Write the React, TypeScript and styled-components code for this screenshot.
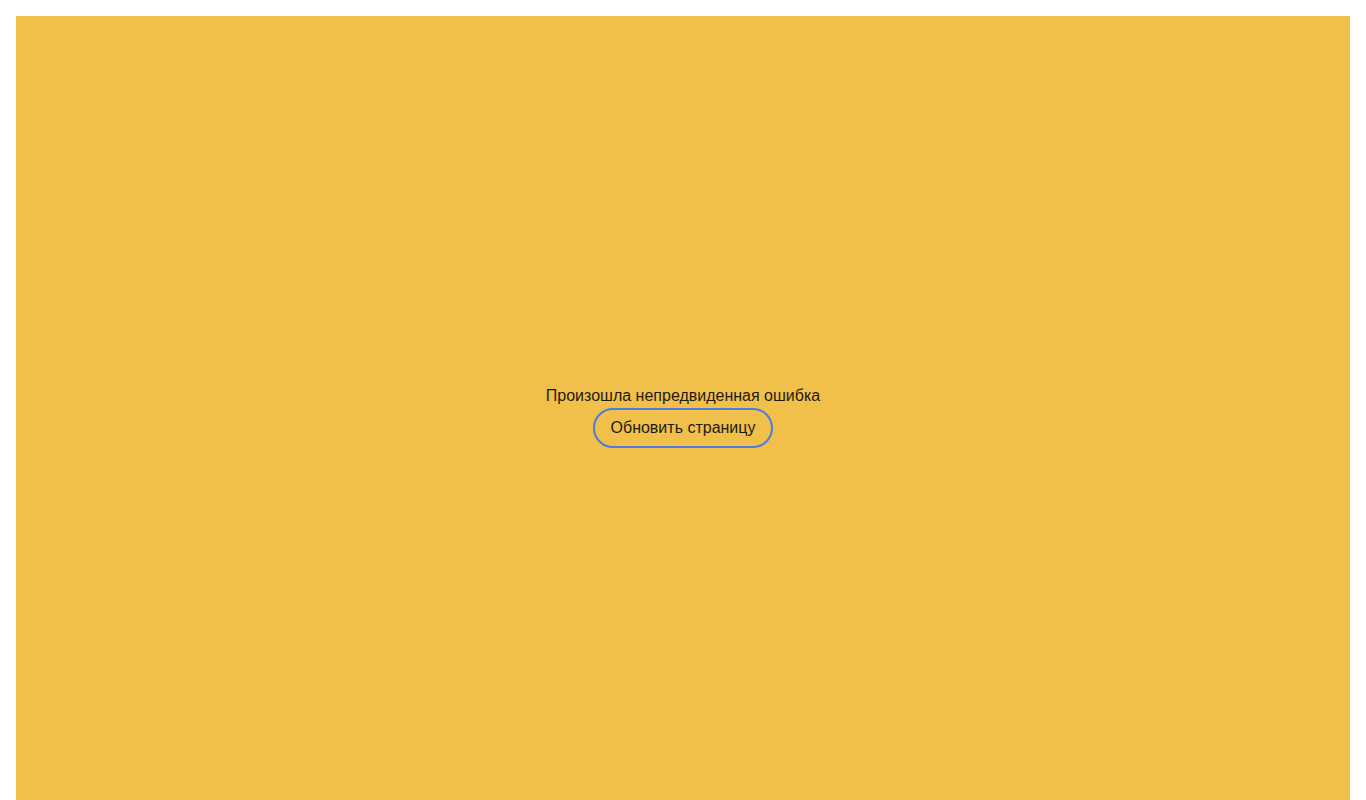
import React from 'react';
import styled, { createGlobalStyle } from 'styled-components';

const GlobalStyle = createGlobalStyle`
  body {
    margin: 16px;
    font-family: "Liberation Sans", Arial, sans-serif;
    background: #ffffff;
  }
`;

// Full-screen error screen on the brand yellow
const ErrorScreen = styled.div`
  min-height: 100vh;
  background: #f0c04b;
  display: flex;
  flex-direction: column;
  align-items: center;
  justify-content: center;
  gap: 1px;
  color: #1f1b14;
`;

const Message = styled.p`
  margin: 0;
  font-size: 16px;
  line-height: 23px;
`;

const ReloadButton = styled.button`
  font-family: inherit;
  font-size: 16px;
  line-height: 18px;
  color: inherit;
  background: transparent;
  border: 2px solid #4d7be0;
  border-radius: 20px;
  padding: 9px 16px;
  cursor: pointer;
`;

export default function App() {
  return (
    <>
      <GlobalStyle />
      <ErrorScreen>
        <Message>Произошла непредвиденная ошибка</Message>
        <ReloadButton onClick={() => window.location.reload()}>
          Обновить страницу
        </ReloadButton>
      </ErrorScreen>
    </>
  );
}
